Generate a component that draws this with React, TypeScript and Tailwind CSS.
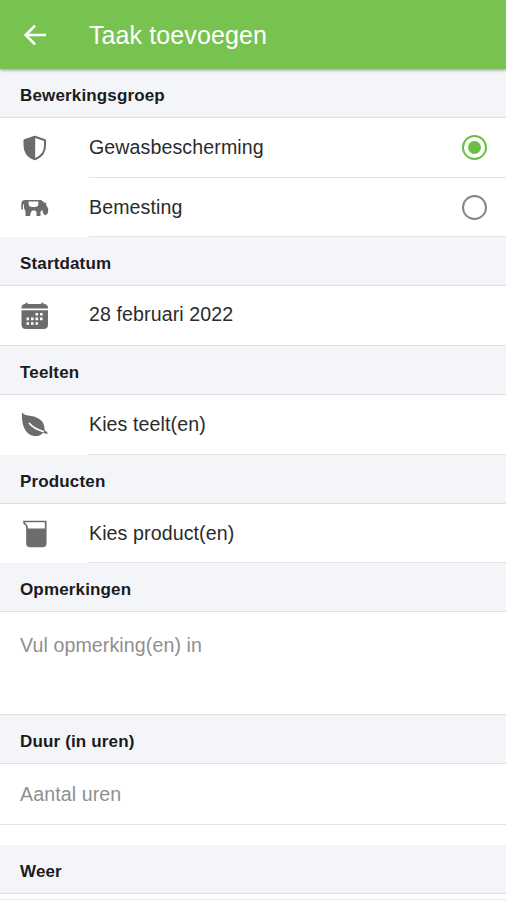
import type { ReactNode } from "react";

function BackArrow() {
  return (
    <svg viewBox="0 0 24 24" className="size-[24px]" fill="none" stroke="#fff" strokeWidth="2.6">
      <path d="M23 12H3M12 2.700 2.700 12l9.300 9.300" />
    </svg>
  );
}

function Shield() {
  return (
    <svg viewBox="0 0 26 26" className="ml-px size-[26px]">
      <path
        d="M12.800 1.800 23 5.300V10.500C23 17 19 22 12.800 24.200 6.500 22 2.500 17 2.500 10.500V5.300Z"
        fill="none"
        stroke="currentColor"
        strokeWidth="2"
        strokeLinejoin="round"
      />
      <path d="M13.200 2V24C6.500 22 2.500 17 2.500 10.500V5.300Z" fill="currentColor" />
    </svg>
  );
}

function Cow() {
  return (
    <svg viewBox="0 0 28 18" className="h-[18px] w-[28px]" fill="currentColor">
      <path
        fillRule="evenodd"
        d="M0.300 10.500V5Q0.300 1 4.500 1H20L22 2.500 24 4 25.500 3.500 25 5.500 27.300 10 26.800 14.500 24 16.500 22 14 21.500 11 19.500 12.500V17H15.500V13L14 11.500H11.500L10 13 9 17H4.500V12.500L3 9V5L2 6V10.500ZM7.500 2.500 8 7 10.500 8H14.500L17 7 17.500 2.500Z"
      />
    </svg>
  );
}

function Calendar() {
  return (
    <svg viewBox="0 0 28 28" className="size-[28px]">
      <path d="M4.500 0.800H6.700V2H20.300V0.800H22.500V2Q27 2.200 27 6V6.500H0.500V6Q0.500 2.200 4.500 2Z" fill="currentColor" />
      <path d="M0.500 8.300H27V22.500Q27 27 22.500 27H5Q0.500 27 0.500 22.500Z" fill="currentColor" />
      {/* day cells, one sub-path per row */}
      <g stroke="#fff" strokeWidth="2.600" strokeDasharray="2.600 1.900">
        <path d="M14.500 12.300H21.600" />
        <path d="M5.500 16.900H21.600" />
        <path d="M5.500 21.500H17.100" />
      </g>
    </svg>
  );
}

function Leaf() {
  return (
    <svg viewBox="0 0 28 28" className="size-[28px]">
      <path
        d="M1 1.500C3 4 6 4.500 10 5 18 6 24 10.500 23.500 19L26.500 21.500V22.700H24.500L22 21.700C19 26 12 26 8 23 2 18.500 0.500 10 1 1.500Z"
        fill="currentColor"
      />
      <path d="M8.500 12.500C11.500 16.500 16 18.500 22.300 20.500" fill="none" stroke="#fff" strokeWidth="1.700" strokeLinecap="round" />
    </svg>
  );
}

function Beaker() {
  return (
    <svg viewBox="0 0 24 28" className="ml-[2px] h-[28px] w-[24px]">
      <path
        d="M1 1.500H22.700V23Q22.700 26.500 19.500 26.500H7Q4 26.500 4 23.500V7Q4 5 1.300 3.500Z"
        fill="none"
        stroke="currentColor"
        strokeWidth="1.700"
      />
      <path d="M4 8.500H22.500V24L20 26.500H6L4 24Z" fill="currentColor" />
    </svg>
  );
}

function SectionTitle({ children }: { children: ReactNode }) {
  return (
    <h2 className="flex h-[49px] shrink-0 items-center border-b border-[#dedfe2] bg-[#f3f5f9] pt-[5px] pl-5 text-[17px] font-bold tracking-[0.15px] text-[#1b1b1d]">
      {children}
    </h2>
  );
}

function Radio({ checked }: { checked?: boolean }) {
  return (
    <span
      className={`mr-[19px] flex size-[25px] items-center justify-center rounded-full border-2 ${
        checked ? "border-[#69bf43]" : "border-[#858585]"
      }`}
    >
      {checked && <span className="size-[13px] rounded-full bg-[#69bf43]" />}
    </span>
  );
}

type RowProps = {
  icon: ReactNode;
  label: string;
  className: string;
  children?: ReactNode;
};

function Row({ icon, label, className, children }: RowProps) {
  return (
    <div className={`flex shrink-0 ${className}`}>
      <span className="flex w-[89px] items-center pl-[21px] text-[#6c6c6c]">{icon}</span>
      <div className="flex flex-1 items-center justify-between border-b border-[#e3e3e3]">
        <span className="pt-px">{label}</span>
        {children}
      </div>
    </div>
  );
}

export default function App() {
  return (
    <div className="flex h-[900px] w-[506px] flex-col overflow-hidden bg-white font-['Liberation_Sans',sans-serif] text-[19.6px] tracking-[0.1px] text-[#2b2b2b]">
      <header className="relative flex h-[69px] shrink-0 items-center bg-[#78c250] pl-[23px] text-white shadow-[0_1px_3px_rgba(0,0,0,0.4)]">
        <BackArrow />
        <h1 className="ml-[42px] pt-[2px] text-[25px]">Taak toevoegen</h1>
      </header>

      <SectionTitle>Bewerkingsgroep</SectionTitle>
      <Row icon={<Shield />} label="Gewasbescherming" className="h-[60px]">
        <Radio checked />
      </Row>
      <Row icon={<Cow />} label="Bemesting" className="h-[59px]">
        <Radio />
      </Row>

      <SectionTitle>Startdatum</SectionTitle>
      <div className="flex h-[60px] shrink-0 items-center border-b border-[#dedfe2]">
        <span className="w-[89px] pl-[21px] text-[#6c6c6c]">
          <Calendar />
        </span>
        <span className="pb-[2px]">28 februari 2022</span>
      </div>

      <SectionTitle>Teelten</SectionTitle>
      <Row icon={<Leaf />} label="Kies teelt(en)" className="h-[60px]" />

      <SectionTitle>Producten</SectionTitle>
      <Row icon={<Beaker />} label="Kies product(en)" className="h-[59px]" />

      <SectionTitle>Opmerkingen</SectionTitle>
      <div className="h-[103px] shrink-0 border-b border-[#dedfe2] pt-[19px] pl-5 text-[#8f8f8f]">
        Vul opmerking(en) in
      </div>

      <SectionTitle>Duur (in uren)</SectionTitle>
      <div className="mb-[20px] flex h-[61px] shrink-0 items-center border-b border-[#e3e3e3] pt-px pl-5 text-[#8f8f8f]">
        Aantal uren
      </div>

      <SectionTitle>Weer</SectionTitle>
      <div className="mt-[5px] h-px shrink-0 bg-[#e3eadf]" />
    </div>
  );
}
